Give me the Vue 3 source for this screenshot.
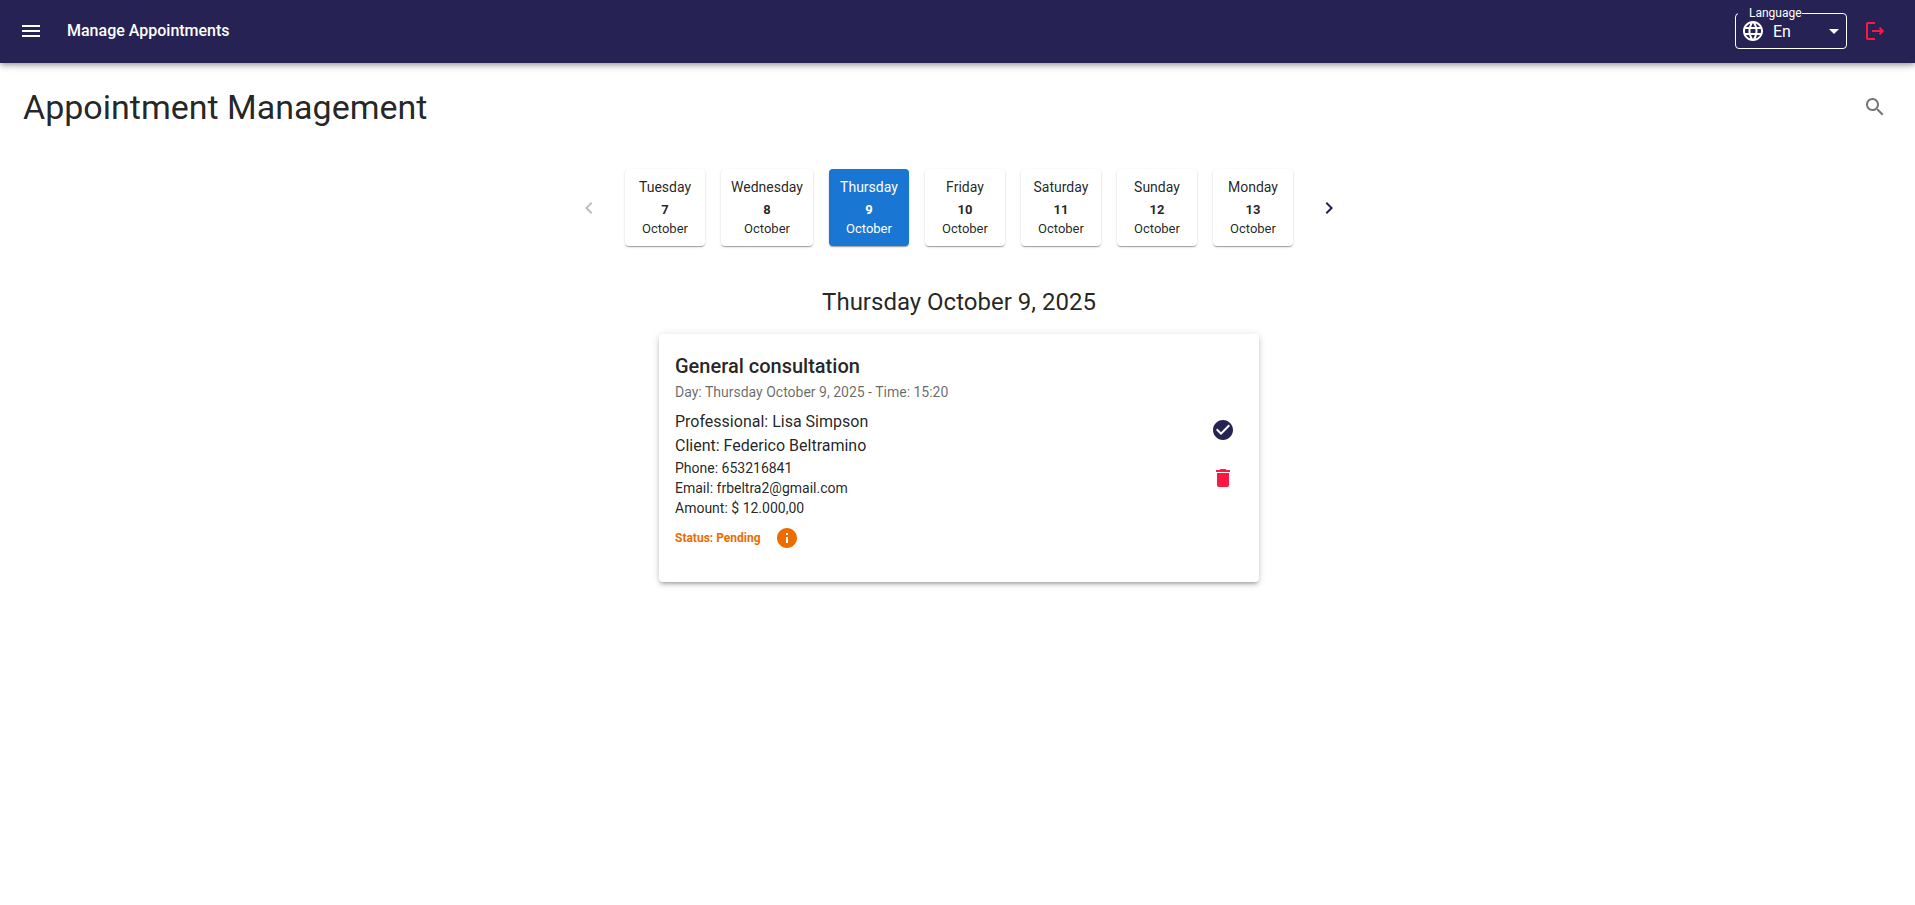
<script setup>
import { ref } from 'vue'

const language = ref('en')
const selected = ref(9)

const days = [
  { name: 'Tuesday', number: 7, month: 'October' },
  { name: 'Wednesday', number: 8, month: 'October' },
  { name: 'Thursday', number: 9, month: 'October' },
  { name: 'Friday', number: 10, month: 'October' },
  { name: 'Saturday', number: 11, month: 'October' },
  { name: 'Sunday', number: 12, month: 'October' },
  { name: 'Monday', number: 13, month: 'October' },
]
</script>

<template>
  <div class="page">
    <header class="bar">
      <button class="icon-button light" type="button" aria-label="Open menu">
        <svg viewBox="0 0 24 24"><path d="M3 18h18v-2H3zm0-5h18v-2H3zm0-7v2h18V6z" /></svg>
      </button>
      <div class="bar-title">Manage Appointments</div>
      <div class="language">
        <label for="language">Language</label>
        <svg viewBox="0 0 24 24">
          <path d="M11.99 2C6.47 2 2 6.48 2 12s4.47 10 9.99 10C17.52 22 22 17.52 22 12S17.52 2 11.99 2m6.93 6h-2.95c-.32-1.25-.78-2.45-1.38-3.56 1.84.63 3.37 1.91 4.33 3.56M12 4.04c.83 1.2 1.48 2.53 1.91 3.96h-3.82c.43-1.43 1.08-2.76 1.91-3.96M4.26 14C4.1 13.36 4 12.69 4 12s.1-1.36.26-2h3.38c-.08.66-.14 1.32-.14 2s.06 1.34.14 2zm.82 2h2.95c.32 1.25.78 2.45 1.38 3.56-1.84-.63-3.37-1.9-4.33-3.56m2.95-8H5.08c.96-1.66 2.49-2.93 4.33-3.56C8.81 5.55 8.35 6.75 8.03 8M12 19.96c-.83-1.2-1.48-2.53-1.91-3.96h3.82c-.43 1.43-1.08 2.76-1.91 3.96M14.34 14H9.66c-.09-.66-.16-1.32-.16-2s.07-1.35.16-2h4.68c.09.65.16 1.32.16 2s-.07 1.34-.16 2m.25 5.56c.6-1.11 1.06-2.31 1.38-3.56h2.95c-.96 1.65-2.49 2.93-4.33 3.56M16.36 14c.08-.66.14-1.32.14-2s-.06-1.34-.14-2h3.38c.16.64.26 1.31.26 2s-.1 1.36-.26 2z" />
        </svg>
        <select id="language" v-model="language">
          <option value="en">En</option>
          <option value="es">Es</option>
        </select>
        <svg class="caret" viewBox="0 0 24 24"><path d="m7 10 5 5 5-5z" /></svg>
      </div>
      <button class="icon-button danger" type="button" aria-label="Log out">
        <svg viewBox="0 0 24 24">
          <path d="M5 21c-1.1 0-2-.9-2-2V5c0-1.1.9-2 2-2h7v2H5v14h7v2zm12.2-5-1.4-1.4 1.6-1.6H9v-2h8.4l-1.6-1.6L17.2 8l4 4z" />
        </svg>
      </button>
    </header>

    <main class="content">
      <div class="heading">
        <h1>Appointment Management</h1>
        <button class="icon-button muted" type="button" aria-label="Search">
          <svg viewBox="0 0 24 24"><path d="M15.5 14h-.79l-.28-.27C15.41 12.59 16 11.11 16 9.5 16 5.91 13.09 3 9.5 3S3 5.91 3 9.5 5.91 16 9.5 16c1.61 0 3.09-.59 4.23-1.57l.27.28v.79l5 4.99L20.49 19zm-6 0C7.01 14 5 11.99 5 9.5S7.01 5 9.5 5 14 7.01 14 9.5 11.99 14 9.5 14" /></svg>
        </button>
      </div>

      <nav class="days" aria-label="Days">
        <button class="icon-button disabled" type="button" aria-label="Previous days" disabled>
          <svg viewBox="0 0 24 24"><path d="M15.41 7.41 14 6l-6 6 6 6 1.41-1.41L10.83 12z" /></svg>
        </button>
        <div class="day-list">
          <button
            v-for="day in days"
            :key="day.number"
            type="button"
            class="day"
            :class="{ active: day.number === selected }"
            @click="selected = day.number"
          >
            <span class="day-name">{{ day.name }}</span>
            <strong>{{ day.number }}</strong>
            <span class="month">{{ day.month }}</span>
          </button>
        </div>
        <button class="icon-button primary" type="button" aria-label="Next days">
          <svg viewBox="0 0 24 24"><path d="M10 6 8.59 7.41 13.17 12l-4.58 4.59L10 18l6-6z" /></svg>
        </button>
      </nav>

      <h2>Thursday October 9, 2025</h2>

      <article class="card">
        <div class="details">
          <h3>General consultation</h3>
          <p class="when">Day: Thursday October 9, 2025 - Time: 15:20</p>
          <p class="person">Professional: Lisa Simpson</p>
          <p class="person">Client: Federico Beltramino</p>
          <p>Phone: 653216841</p>
          <p>Email: frbeltra2@gmail.com</p>
          <p>Amount: $ 12.000,00</p>
          <div class="status">
            <span>Status: Pending</span>
            <button class="icon-button warning" type="button" aria-label="Status information">
              <svg viewBox="0 0 24 24"><path d="M12 2C6.48 2 2 6.48 2 12s4.48 10 10 10 10-4.48 10-10S17.52 2 12 2m1 15h-2v-6h2zm0-8h-2V7h2z" /></svg>
            </button>
          </div>
        </div>
        <div class="actions">
          <button class="icon-button primary" type="button" aria-label="Confirm appointment">
            <svg viewBox="0 0 24 24"><path d="M12 2C6.48 2 2 6.48 2 12s4.48 10 10 10 10-4.48 10-10S17.52 2 12 2m-2 15-5-5 1.41-1.41L10 14.17l7.59-7.59L19 8z" /></svg>
          </button>
          <button class="icon-button danger" type="button" aria-label="Delete appointment">
            <svg viewBox="0 0 24 24"><path d="M6 19c0 1.1.9 2 2 2h8c1.1 0 2-.9 2-2V7H6zM19 4h-3.5l-1-1h-5l-1 1H5v2h14z" /></svg>
          </button>
        </div>
      </article>
    </main>
  </div>
</template>

<style>
body {
  background: #fff;
}
</style>

<style scoped>
.page {
  color: rgba(0, 0, 0, 0.87);
  font-family: Roboto, "Liberation Sans", sans-serif;
  font-size: 14px;
  line-height: 20px;
}

svg {
  display: block;
  flex: none;
  width: 24px;
  height: 24px;
  fill: currentColor;
}

h1, h2, h3, p {
  margin: 0;
  font-weight: 400;
}

.icon-button {
  flex: none;
  padding: 8px;
  border: 0;
  border-radius: 50%;
  background: none;
  color: inherit;
  cursor: pointer;
}

.light { color: #fff; }
.muted { color: rgba(0, 0, 0, 0.54); }
.disabled { color: rgba(0, 0, 0, 0.26); cursor: default; }
.primary { color: #262253; }
.danger { color: #ff1744; }
.warning { color: #ed6c02; }

.bar {
  display: flex;
  align-items: center;
  box-sizing: border-box;
  height: 63px;
  padding: 0 20px 1px 11px;
  background: #262253;
  color: #fff;
  box-shadow: 0 2px 4px -1px rgba(0, 0, 0, 0.2), 0 4px 5px rgba(0, 0, 0, 0.14), 0 1px 10px rgba(0, 0, 0, 0.12);
}

.bar-title {
  flex: 1;
  margin-left: 16px;
  font-size: 16px;
  font-weight: 500;
  line-height: 24px;
}

.language {
  position: relative;
  display: flex;
  align-items: center;
  box-sizing: border-box;
  width: 112px;
  height: 36px;
  margin-right: 8px;
  padding-left: 5px;
  border: 1px solid #fff;
  border-radius: 4px;
}

.language label {
  position: absolute;
  top: -8px;
  left: 2px;
  padding-left: 11px;
  background: #262253;
  font-size: 12px;
  line-height: 14px;
}

.language select {
  flex: 1;
  width: 100%;
  height: 34px;
  margin-right: -32px;
  padding: 0 32px 0 8px;
  border: 0;
  outline: 0;
  background: none;
  color: #fff;
  font: 400 16px Roboto, "Liberation Sans", sans-serif;
  appearance: none;
}

.language option { color: #222; }

.caret {
  margin-left: auto;
  pointer-events: none;
}

.content {
  display: flex;
  flex-direction: column;
  align-items: center;
  padding: 24px 20px 24px 23px;
}

.heading {
  display: flex;
  align-items: center;
  justify-content: space-between;
  align-self: stretch;
}

h1 {
  font-size: 34px;
  line-height: 40px;
}

.days {
  display: flex;
  align-items: center;
  gap: 16px;
  margin-top: 42px;
}

.day-list {
  display: flex;
  gap: 16px;
}

.day {
  display: flex;
  flex-direction: column;
  align-items: center;
  min-width: 80px;
  padding: 8px 10px 10px;
  border: 0;
  border-radius: 4px;
  background: #fff;
  color: inherit;
  font: 400 14px/20px Roboto, "Liberation Sans", sans-serif;
  cursor: pointer;
  box-shadow: 0 2px 1px -1px rgba(0, 0, 0, 0.2), 0 1px 1px rgba(0, 0, 0, 0.14), 0 1px 3px rgba(0, 0, 0, 0.12);
}

.day.active {
  background: #1976d2;
  color: #fff;
}

.day strong {
  font-size: 13px;
  font-weight: 700;
  line-height: 25px;
}

.month {
  font-size: 13px;
  line-height: 14px;
}

h2 {
  margin-top: 40px;
  font-size: 24px;
  line-height: 32px;
}

.card {
  display: flex;
  align-items: center;
  justify-content: space-between;
  box-sizing: border-box;
  width: 100%;
  max-width: 600px;
  margin-top: 16px;
  padding: 16px 16px 24px;
  border-radius: 4px;
  background: #fff;
  box-shadow: 0 3px 3px -2px rgba(0, 0, 0, 0.2), 0 3px 4px rgba(0, 0, 0, 0.14), 0 1px 8px rgba(0, 0, 0, 0.12);
}

h3 {
  font-size: 20px;
  font-weight: 500;
  line-height: 32px;
}

.when {
  margin-bottom: 8px;
  color: rgba(0, 0, 0, 0.6);
}

.person {
  font-size: 16px;
  line-height: 24px;
}

.status {
  display: flex;
  align-items: center;
  gap: 6px;
  color: #ed6c02;
  font-size: 12px;
  font-weight: 700;
}

.actions {
  display: flex;
  flex-direction: column;
  gap: 8px;
}
</style>
